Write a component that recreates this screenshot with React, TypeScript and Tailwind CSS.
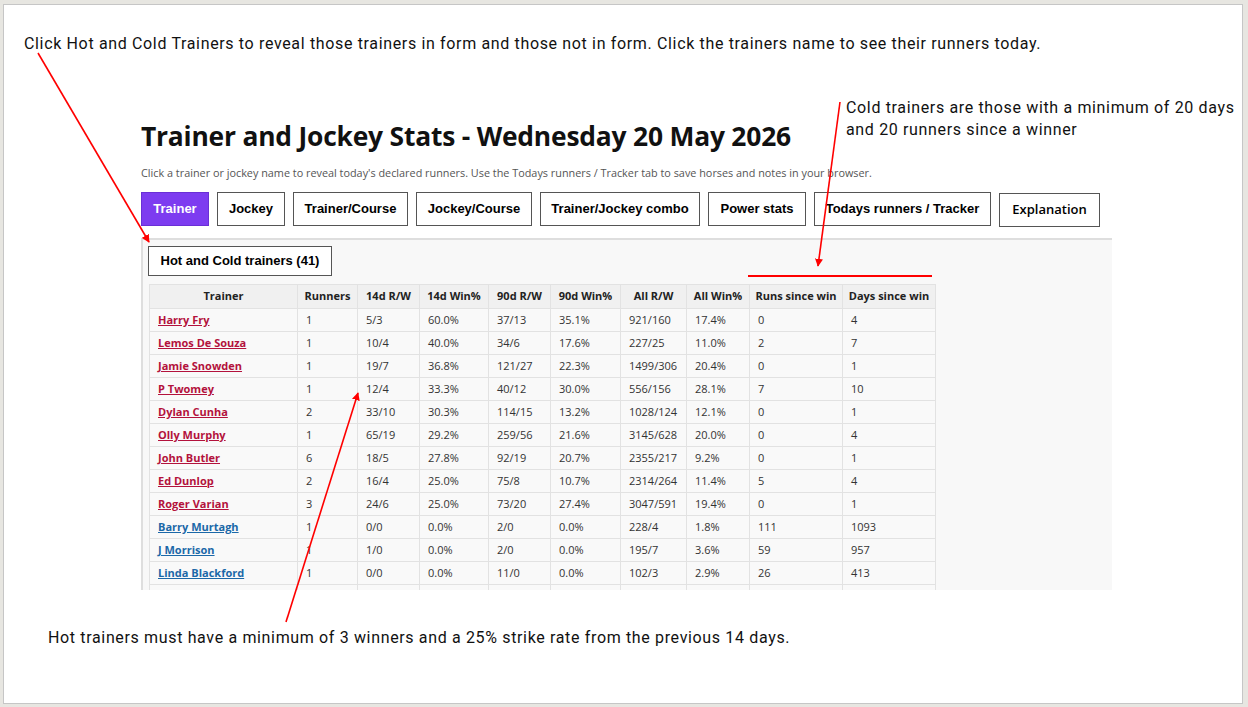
import React from 'react';

type Row = {
  name: string;
  hot: boolean;
  cells: string[];
};

const rows: Row[] = [
  { name: 'Harry Fry', hot: true, cells: ['1', '5/3', '60.0%', '37/13', '35.1%', '921/160', '17.4%', '0', '4'] },
  { name: 'Lemos De Souza', hot: true, cells: ['1', '10/4', '40.0%', '34/6', '17.6%', '227/25', '11.0%', '2', '7'] },
  { name: 'Jamie Snowden', hot: true, cells: ['1', '19/7', '36.8%', '121/27', '22.3%', '1499/306', '20.4%', '0', '1'] },
  { name: 'P Twomey', hot: true, cells: ['1', '12/4', '33.3%', '40/12', '30.0%', '556/156', '28.1%', '7', '10'] },
  { name: 'Dylan Cunha', hot: true, cells: ['2', '33/10', '30.3%', '114/15', '13.2%', '1028/124', '12.1%', '0', '1'] },
  { name: 'Olly Murphy', hot: true, cells: ['1', '65/19', '29.2%', '259/56', '21.6%', '3145/628', '20.0%', '0', '4'] },
  { name: 'John Butler', hot: true, cells: ['6', '18/5', '27.8%', '92/19', '20.7%', '2355/217', '9.2%', '0', '1'] },
  { name: 'Ed Dunlop', hot: true, cells: ['2', '16/4', '25.0%', '75/8', '10.7%', '2314/264', '11.4%', '5', '4'] },
  { name: 'Roger Varian', hot: true, cells: ['3', '24/6', '25.0%', '73/20', '27.4%', '3047/591', '19.4%', '0', '1'] },
  { name: 'Barry Murtagh', hot: false, cells: ['1', '0/0', '0.0%', '2/0', '0.0%', '228/4', '1.8%', '111', '1093'] },
  { name: 'J Morrison', hot: false, cells: ['1', '1/0', '0.0%', '2/0', '0.0%', '195/7', '3.6%', '59', '957'] },
  { name: 'Linda Blackford', hot: false, cells: ['1', '0/0', '0.0%', '11/0', '0.0%', '102/3', '2.9%', '26', '413'] },
];

const headers = [
  { label: 'Trainer', w: 'w-[148px]' },
  { label: 'Runners', w: 'w-[60px]' },
  { label: '14d R/W', w: 'w-[62px]' },
  { label: '14d Win%', w: 'w-[69px]' },
  { label: '90d R/W', w: 'w-[62px]' },
  { label: '90d Win%', w: 'w-[70px]' },
  { label: 'All R/W', w: 'w-[66px]' },
  { label: 'All Win%', w: 'w-[63px]' },
  { label: 'Runs since win', w: 'w-[93px]' },
  { label: 'Days since win', w: 'w-[93px]' },
];

const tabs = [
  { label: 'Trainer', w: 'w-[68px]', active: true },
  { label: 'Jockey', w: 'w-[68px]' },
  { label: 'Trainer/Course', w: 'w-[115px]' },
  { label: 'Jockey/Course', w: 'w-[116px]' },
  { label: 'Trainer/Jockey combo', w: 'w-[160px]' },
  { label: 'Power stats', w: 'w-[98px]' },
  { label: 'Todays runners / Tracker', w: 'w-[177px]' },
];

const Annotations = () => (
  <svg className="absolute inset-0 pointer-events-none" width="1248" height="707" viewBox="0 0 1248 707">
    <defs>
      <marker id="head" viewBox="0 0 10 10" refX="9" refY="5" markerWidth="5" markerHeight="5" orient="auto">
        <path d="M0 0 L10 5 L0 10 z" fill="#ff0000" />
      </marker>
    </defs>
    <line x1="38" y1="53" x2="149" y2="242" stroke="#ff0000" strokeWidth="1.6" markerEnd="url(#head)" />
    <line x1="840" y1="102" x2="818" y2="266" stroke="#ff0000" strokeWidth="1.6" markerEnd="url(#head)" />
    <line x1="748" y1="276" x2="932" y2="276" stroke="#ff0000" strokeWidth="2" />
    <line x1="286" y1="622" x2="358" y2="393" stroke="#ff0000" strokeWidth="1.6" markerEnd="url(#head)" />
  </svg>
);

const StatsShot = () => (
  <div className="ml-[136px] mt-[46px] w-[972px] h-[490px] overflow-hidden pl-px pt-[19px] font-['Open_Sans',sans-serif] text-[#222] tracking-normal">
    <h1 className="text-[26.4px] leading-[34px] font-bold text-[#111] tracking-[-0.2px] whitespace-nowrap">
      Trainer and Jockey Stats - Wednesday 20 May 2026
    </h1>
    <p className="mt-[12px] text-[10.85px] leading-[16px] text-[#555] whitespace-nowrap">
      Click a trainer or jockey name to reveal today's declared runners. Use the Todays runners / Tracker tab to save horses and notes in your browser.
    </p>
    <div className="mt-[11px] flex gap-2 font-['Liberation_Sans',Arial,sans-serif] text-[13px] font-bold">
      {tabs.map((t) => (
        <div
          key={t.label}
          className={`${t.w} h-[34px] flex items-center justify-center border ${
            t.active ? 'bg-[#7d3cf0] border-[#6a2fd6] text-white' : 'bg-white border-[#555] text-black'
          }`}
        >
          {t.label}
        </div>
      ))}
      <div className="w-[101px] h-[34px] mt-px flex items-center justify-center border border-[#555] bg-white text-black font-['Open_Sans',sans-serif] text-[13px] font-semibold">
        Explanation
      </div>
    </div>
    <div className="mt-[11px] h-[400px] w-[971px] bg-[#f8f8f8] border-t-2 border-l-2 border-[#dedede] pl-[5px] pt-[6px]">
      <div className="w-[184px] h-[30px] flex items-center justify-center bg-white border border-[#555] font-['Liberation_Sans',Arial,sans-serif] text-[13px] font-bold text-black">
        Hot and Cold trainers (41)
      </div>
      <table className="mt-[8px] ml-px w-[786px] border-collapse text-[11px] table-fixed whitespace-nowrap">
        <thead>
          <tr className="h-[24px] bg-[#f0f0f0]">
            {headers.map((h) => (
              <th key={h.label} className={`${h.w} border border-[#e2e2e2] font-bold text-center px-0 text-[#222]`}>
                {h.label}
              </th>
            ))}
          </tr>
        </thead>
        <tbody>
          {rows.map((r) => (
            <tr key={r.name} className="h-[23px] bg-[#f9f9f9]">
              <td className="border border-[#e2e2e2] px-2">
                <span className={`font-bold underline ${r.hot ? 'text-[#b3123c]' : 'text-[#1b68a8]'}`}>{r.name}</span>
              </td>
              {r.cells.map((c, i) => (
                <td key={i} className="border border-[#e2e2e2] px-2 text-[#333]">
                  {c}
                </td>
              ))}
            </tr>
          ))}
          <tr className="h-[23px] bg-[#f9f9f9]">
            {headers.map((h) => (
              <td key={h.label} className="border border-[#e2e2e2]" />
            ))}
          </tr>
        </tbody>
      </table>
    </div>
  </div>
);

export default function App() {
  return (
    <div className="relative w-[1248px] h-[707px] bg-[#e7e6e1] pt-[4px] pl-[3px] overflow-hidden">
      <div className="relative w-[1240px] h-[700px] bg-white border border-[#c6c6c6] font-['Roboto',sans-serif] text-[#111] tracking-[0.65px]">
        <div className="pt-[29px] pl-[20px] text-[16px] leading-[20px] whitespace-nowrap">
          Click Hot and Cold Trainers to reveal those trainers in form and those not in form. Click the trainers name to see their runners today.
        </div>
        <StatsShot />
        <div className="mt-[38px] pl-[44px] text-[16px] leading-[20px] whitespace-nowrap">
          Hot trainers must have a minimum of 3 winners and a 25% strike rate from the previous 14 days.
        </div>
        <div className="absolute left-[842px] top-[92px] text-[16px] leading-[22px] whitespace-nowrap">
          <p>Cold trainers are those with a minimum of 20 days</p>
          <p>and 20 runners since a winner</p>
        </div>
      </div>
      <Annotations />
    </div>
  );
}
